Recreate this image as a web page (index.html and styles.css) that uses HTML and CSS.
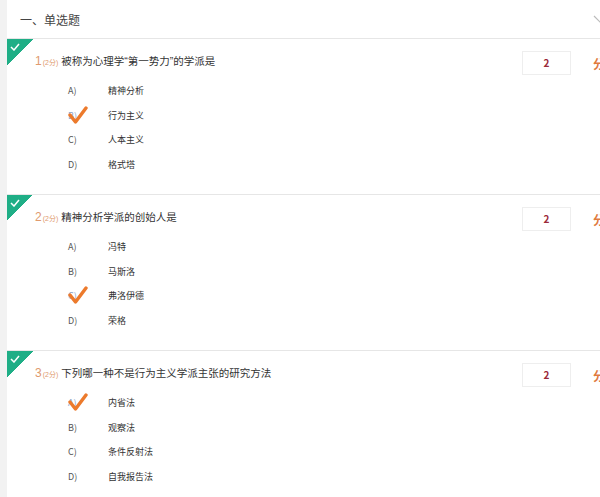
FILE: index.html
```html
<!DOCTYPE html>
<html lang="zh-CN">
<head>
  <meta charset="UTF-8">
  <meta name="viewport" content="width=device-width, initial-scale=1.0">
  <title>单选题</title>
  <link rel="stylesheet" href="styles.css">
</head>
<body>
  <div class="paper">
    <div class="section-head">
      <span>一、单选题</span>
      <svg class="chevron" width="14" height="8" viewBox="0 0 14 8"><path d="M1 1 L7 7 L13 1" fill="none" stroke="#bbb" stroke-width="1.2"/></svg>
    </div>

    <div class="question">
      <div class="corner">
        <svg width="10" height="8" viewBox="0 0 10 8"><path d="M1 4 L4 7 L9 1" fill="none" stroke="#fff" stroke-width="1.5"/></svg>
      </div>
      <div class="q-row">
        <div class="q-title"><span class="q-num">1</span><span class="q-score">(2分)</span>被称为心理学“第一势力”的学派是</div>
        <div class="score-box">2</div>
        <div class="score-unit">分</div>
      </div>
      <ul class="options">
        <li><span class="letter">A)</span>精神分析</li>
        <li class="picked"><span class="letter">B)</span>行为主义</li>
        <li><span class="letter">C)</span>人本主义</li>
        <li><span class="letter">D)</span>格式塔</li>
      </ul>
    </div>

    <div class="question">
      <div class="corner">
        <svg width="10" height="8" viewBox="0 0 10 8"><path d="M1 4 L4 7 L9 1" fill="none" stroke="#fff" stroke-width="1.5"/></svg>
      </div>
      <div class="q-row">
        <div class="q-title"><span class="q-num">2</span><span class="q-score">(2分)</span>精神分析学派的创始人是</div>
        <div class="score-box">2</div>
        <div class="score-unit">分</div>
      </div>
      <ul class="options">
        <li><span class="letter">A)</span>冯特</li>
        <li><span class="letter">B)</span>马斯洛</li>
        <li class="picked"><span class="letter">C)</span>弗洛伊德</li>
        <li><span class="letter">D)</span>荣格</li>
      </ul>
    </div>

    <div class="question">
      <div class="corner">
        <svg width="10" height="8" viewBox="0 0 10 8"><path d="M1 4 L4 7 L9 1" fill="none" stroke="#fff" stroke-width="1.5"/></svg>
      </div>
      <div class="q-row">
        <div class="q-title"><span class="q-num">3</span><span class="q-score">(2分)</span>下列哪一种不是行为主义学派主张的研究方法</div>
        <div class="score-box">2</div>
        <div class="score-unit">分</div>
      </div>
      <ul class="options">
        <li class="picked"><span class="letter">A)</span>内省法</li>
        <li><span class="letter">B)</span>观察法</li>
        <li><span class="letter">C)</span>条件反射法</li>
        <li><span class="letter">D)</span>自我报告法</li>
      </ul>
    </div>
  </div>
</body>
</html>
```

FILE: styles.css
```css
body {
  margin: 0;
  background: #fff;
  font-family: "Noto Sans CJK SC", "Liberation Sans", sans-serif;
  color: #333;
  overflow: hidden;
}

.paper {
  border-left: 7px solid #f2f2f2;
  width: 598px;
  height: 497px;
}

.section-head {
  height: 38px;
  display: flex;
  align-items: center;
  justify-content: space-between;
  padding-left: 13px;
  margin-right: -2px;
  border-bottom: 1px solid #e6e6e6;
  font-size: 12px;
  color: #444;
}

.question {
  position: relative;
  height: 155px;
  margin-right: -2px;
  border-bottom: 1px solid #e6e6e6;
}

.corner {
  position: absolute;
  left: 0;
  top: 0;
  width: 26px;
  height: 26px;
  background: linear-gradient(135deg, #1fae86 50%, transparent 50%);
}

.corner svg {
  position: absolute;
  left: 3px;
  top: 4px;
}

.q-row {
  display: flex;
  align-items: center;
  padding: 12px 2px 0 28px;
  height: 24px;
}

.q-title {
  flex: 1;
  padding-bottom: 6px;
  font-family: "Liberation Sans", "Noto Sans CJK SC", sans-serif;
  font-size: 10.5px;
  color: #333;
}

.q-num {
  color: #e09a6e;
  font-size: 12px;
}

.q-score {
  color: #e09a6e;
  font-size: 7px;
  margin: 0 3px 0 1px;
}

.score-box {
  width: 47px;
  height: 22px;
  border: 1px solid #eee;
  text-align: center;
  line-height: 22px;
  font-size: 10px;
  font-weight: bold;
  color: #9b2a3a;
}

.score-unit {
  margin-left: 22px;
  width: 12px;
  white-space: nowrap;
  font-size: 12px;
  font-weight: bold;
  color: #e07a40;
}

.options {
  list-style: none;
  margin: 0;
  padding: 3px 0 0 61px;
}

.options li {
  position: relative;
  height: 24.7px;
  line-height: 25px;
  font-size: 9px;
  color: #333;
}

.letter {
  display: inline-block;
  width: 40px;
  color: #555;
}

.picked .letter {
  color: #8aa4c8;
}

.picked::before {
  content: "";
  position: absolute;
  left: 0;
  top: 3px;
  width: 20px;
  height: 18px;
  background: url("data:image/svg+xml,%3Csvg xmlns='http://www.w3.org/2000/svg' viewBox='0 0 20 18'%3E%3Cpath d='M2 9 L7.5 16 L18 2' fill='none' stroke='%23ec7a2c' stroke-width='3.4' stroke-linecap='round' stroke-linejoin='round'/%3E%3C/svg%3E") no-repeat;
}
```
